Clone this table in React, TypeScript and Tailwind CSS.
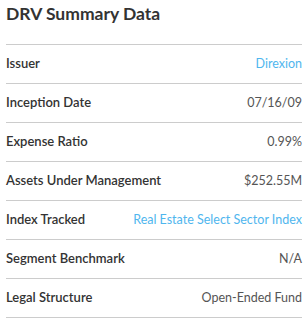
const rows: { label: string; value: string; link?: boolean }[] = [
  { label: "Issuer", value: "Direxion", link: true },
  { label: "Inception Date", value: "07/16/09" },
  { label: "Expense Ratio", value: "0.99%" },
  { label: "Assets Under Management", value: "$252.55M" },
  { label: "Index Tracked", value: "Real Estate Select Sector Index", link: true },
  { label: "Segment Benchmark", value: "N/A" },
  { label: "Legal Structure", value: "Open-Ended Fund" },
];

export default function App() {
  return (
    <div className="w-[308px] h-[321px] bg-white px-[6px] font-['Lato',sans-serif]">
      <div className="h-[45px] border-b border-[#cccccc] pt-[3px]">
        <h2 className="text-[17.5px] font-bold text-[#333333] leading-[22px]">
          DRV Summary Data
        </h2>
      </div>
      {rows.map((r) => (
        <div
          key={r.label}
          className="h-[39px] border-b border-[#cccccc] flex items-center justify-between"
        >
          <span className="text-[13px] font-semibold text-[#333333]">{r.label}</span>
          <span
            className={
              r.link
                ? "text-[12.5px] text-[#4fb6ee]"
                : "text-[12.5px] text-[#555555]"
            }
          >
            {r.value}
          </span>
        </div>
      ))}
    </div>
  );
}
